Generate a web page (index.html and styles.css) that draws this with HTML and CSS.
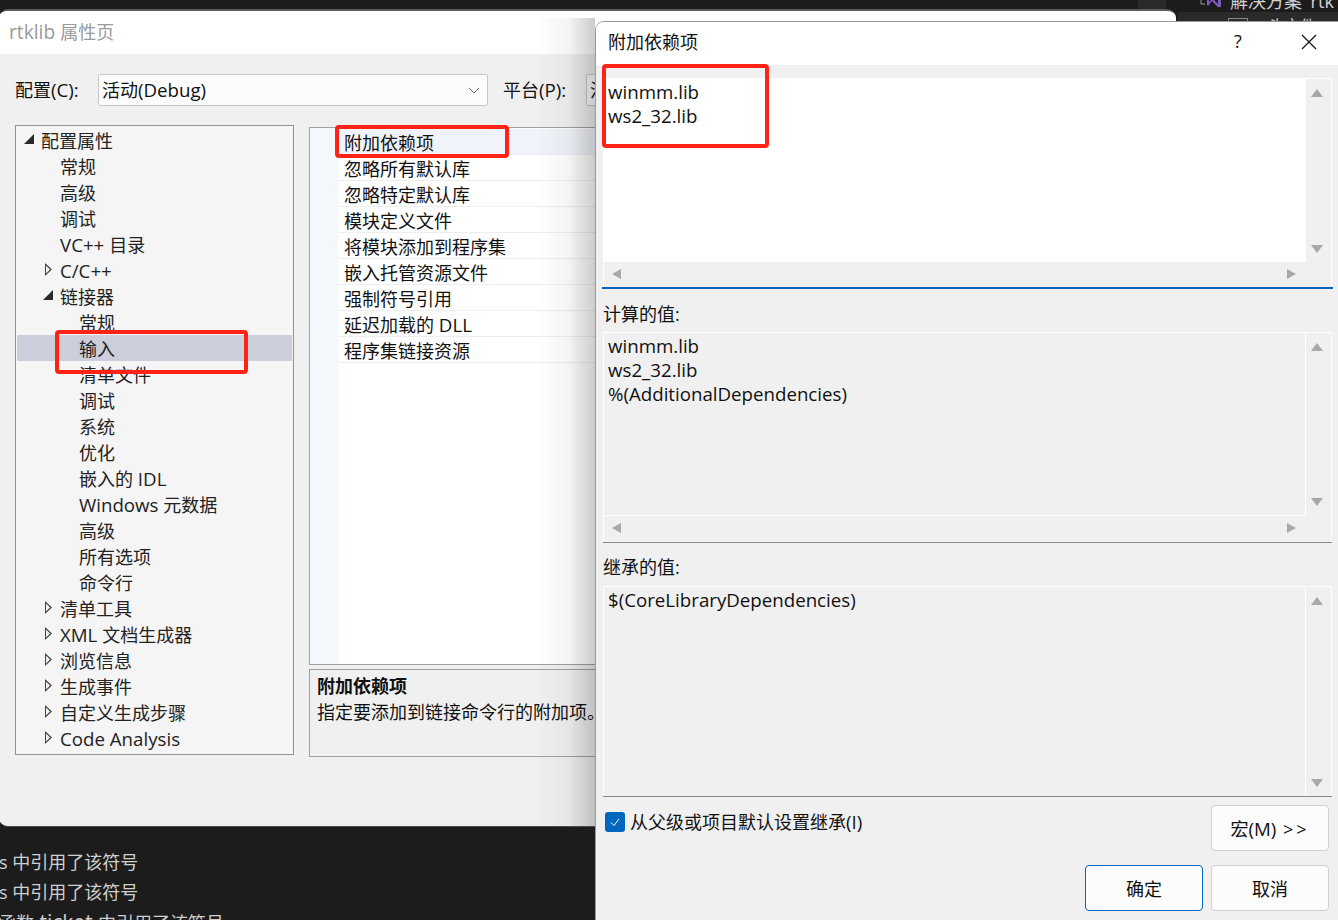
FILE: index.html
```html
<!DOCTYPE html>
<html lang="zh">
<head>
<meta charset="utf-8">
<title>rtklib 属性页</title>
<link rel="stylesheet" href="styles.css">
</head>
<body>
<div class="desktop">
  <div class="topstrip"></div>
  <div class="solution">
    <svg class="vs" width="22" height="14" viewBox="0 0 22 14"><path d="M5 0H1V10H5" fill="none" stroke="#999" stroke-width="1"/><path d="M8 0L12 5L18 0H21V13H18L12 7L8 12L7 11V0ZM9 4V8L11 6ZM18 3L14 6L18 10Z" fill="#7b5bc0" fill-rule="evenodd"/></svg>
    <span class="sol-text">解决方案 'rtk</span>
  </div>
  <div class="sol-row2"><span class="sol-box"></span><span class="sol-t2">头文件</span></div>
  <div class="output">
    <div class="out1">s 中引用了该符号</div>
    <div class="out1">s 中引用了该符号</div>
    <div class="out1 out3">函数<span class="lat-o"> ticket </span>中引用了该符号</div>
  </div>

  <section class="win main">
    <header class="win-title main-title"><span class="lat-t">rtklib </span>属性页</header>
    <div class="cfg">
      <span class="cfg-label">配置<span class="lat">(C):</span></span>
      <div class="combo">活动<span class="lat">(Debug)</span>
        <svg class="chev" width="12" height="7" viewBox="0 0 12 7"><path d="M1 1L6 6L11 1" fill="none" stroke="#666"/></svg>
      </div>
      <span class="cfg-label plat">平台<span class="lat">(P):</span></span>
      <div class="combo combo2">活动<span class="lat">(x64)</span></div>
    </div>
    <div class="panes">
      <nav class="tree">
        <div class="node l0"><i class="tri open"></i>配置属性</div>
        <div class="node l1">常规</div>
        <div class="node l1">高级</div>
        <div class="node l1">调试</div>
        <div class="node l1"><span class="lat">VC++ </span>目录</div>
        <div class="node l1"><i class="tri closed"></i><span class="lat">C/C++</span></div>
        <div class="node l1"><i class="tri open"></i>链接器</div>
        <div class="node l2">常规</div>
        <div class="node l2 sel">输入</div>
        <div class="node l2">清单文件</div>
        <div class="node l2">调试</div>
        <div class="node l2">系统</div>
        <div class="node l2">优化</div>
        <div class="node l2">嵌入的<span class="lat"> IDL</span></div>
        <div class="node l2"><span class="lat">Windows </span>元数据</div>
        <div class="node l2">高级</div>
        <div class="node l2">所有选项</div>
        <div class="node l2">命令行</div>
        <div class="node l1"><i class="tri closed"></i>清单工具</div>
        <div class="node l1"><i class="tri closed"></i><span class="lat">XML </span>文档生成器</div>
        <div class="node l1"><i class="tri closed"></i>浏览信息</div>
        <div class="node l1"><i class="tri closed"></i>生成事件</div>
        <div class="node l1"><i class="tri closed"></i>自定义生成步骤</div>
        <div class="node l1"><i class="tri closed"></i><span class="lat">Code Analysis</span></div>
      </nav>
      <div class="pane-r">
        <div class="grid">
          <div class="row first">附加依赖项</div>
          <div class="row">忽略所有默认库</div>
          <div class="row">忽略特定默认库</div>
          <div class="row">模块定义文件</div>
          <div class="row">将模块添加到程序集</div>
          <div class="row">嵌入托管资源文件</div>
          <div class="row">强制符号引用</div>
          <div class="row">延迟加载的<span class="lat"> DLL</span></div>
          <div class="row">程序集链接资源</div>
        </div>
        <div class="desc">
          <div class="desc-h">附加依赖项</div>
          <div>指定要添加到链接命令行的附加项。</div>
        </div>
      </div>
    </div>
    <span class="mark m-input"></span>
    <span class="mark m-dep"></span>
  </section>
  <div class="shadow"></div>

  <section class="win dialog">
    <header class="win-title dlg-title">
      <span>附加依赖项</span>
      <span class="help">?</span>
      <svg class="close" width="16" height="16" viewBox="0 0 16 16"><path d="M1 1L15 15M15 1L1 15" stroke="#111" stroke-width="1.2" fill="none"/></svg>
    </header>
    <div class="dlg-body">
      <div class="tbox edit">
        <div class="tcontent lat">winmm.lib<br>ws2_32.lib</div>
        <div class="vbar"><i class="a up"></i><i class="a down"></i></div>
        <div class="hbar"><i class="a lf"></i><i class="a rt"></i></div>
      </div>
      <div class="rule-blue"></div>
      <div class="lbl l-calc">计算的值:</div>
      <div class="tbox calc">
        <div class="tcontent lat">winmm.lib<br>ws2_32.lib<br>%(AdditionalDependencies)</div>
        <div class="vbar"><i class="a up"></i><i class="a down"></i></div>
        <div class="hbar"><i class="a lf"></i><i class="a rt"></i></div>
      </div>
      <div class="rule-grey"></div>
      <div class="lbl l-inh">继承的值:</div>
      <div class="tbox inh">
        <div class="tcontent lat">$(CoreLibraryDependencies)</div>
        <div class="vbar"><i class="a up"></i><i class="a down"></i></div>
      </div>
      <div class="rule-grey"></div>
      <div class="foot">
        <label class="check">
          <span class="box"><svg width="14" height="14" viewBox="0 0 14 14"><path d="M3 7.5L6 10.5L11 4" fill="none" stroke="#fff" stroke-width="1"/></svg></span>
          <span>从父级或项目默认设置继承<span class="lat">(I)</span></span>
        </label>
        <button class="btn">宏<span class="lat">(M)</span> <span class="gt">&gt;&gt;</span></button>
      </div>
      <div class="actions">
        <button class="btn primary">确定</button>
        <button class="btn">取消</button>
      </div>
    </div>
    <span class="mark m-lib"></span>
  </section>
</div>
</body>
</html>
```
FILE: styles.css
```css
* { box-sizing: border-box; }
html, body { margin: 0; padding: 0; }
body {
  width: 1338px; height: 920px; overflow: hidden; background: #1c1c1c;
  font-family: "Open Sans", "Noto Sans CJK SC", sans-serif;
  font-size: 18px; color: #111;
}
.desktop { position: relative; width: 1338px; height: 920px; overflow: hidden; }
.lat { font-size: 18.7px; }
.lat-t { font-size: 19.2px; }
.lat-o { font-size: 21px; }

.topstrip { position: absolute; left: 1138px; top: 0; width: 28px; height: 9px; background: #2a2a2a; }
.solution { position: absolute; left: 1178px; top: -8px; width: 160px; height: 18px; display: flex; align-items: center; gap: 8px; padding-left: 22px; color: #d0d0d0; font-size: 18px; }
.sol-text { white-space: nowrap; line-height: 18px; }
.vs { flex: none; }
.sol-row2 { position: absolute; left: 1178px; top: 12px; width: 160px; height: 12px; padding: 6px 0 0 50px; background: #2a2a2a; display: flex; align-items: flex-start; gap: 20px; color: #ccc; font-size: 16px; line-height: 16px; }
.sol-box { width: 20px; height: 10px; flex: none; border: 1px solid #888; }
.sol-t2 { white-space: nowrap; }
.output { position: absolute; left: 0; top: 847px; color: #cfcfcf; font-size: 18px; }
.out1 { height: 30px; line-height: 30px; white-space: nowrap; margin-left: -1px; }
.out3 { margin-left: -2px; }

.win { position: absolute; display: flex; flex-direction: column; background: #f0f0f0; overflow: hidden; }
.win-title { background: #fff; flex: none; }
.main { left: -1px; top: 9px; width: 1177px; height: 818px; border-radius: 9px; border-top: 2px solid #5c5c5c; border-bottom: 1px solid #4a4a4a; padding-left: 1px; }
.main-title { height: 43px; margin-left: -1px; padding: 6px 0 0 10px; font-size: 18px; line-height: 30px; color: #9a9a9a; }

.cfg { display: flex; align-items: center; height: 32px; margin: 20px 0 0 15px; }
.cfg-label { width: 83px; flex: none; line-height: 32px; white-space: nowrap; }
.combo { position: relative; width: 390px; height: 32px; line-height: 29px; background: #fcfcfc; border: 1px solid #c8c8c8; border-radius: 2px; padding-left: 3px; flex: none; white-space: nowrap; }
.chev { position: absolute; right: 7px; top: 12px; }
.plat { width: 83px; margin-left: 15px; }
.combo2 { width: 300px; }

.panes { display: flex; margin: 19px 0 0 15px; align-items: flex-start; }
.tree { width: 279px; height: 630px; flex: none; background: #f5f5f5; border: 1px solid #8f9296; padding: 1px 1px 0; }
.node { position: relative; height: 26px; line-height: 28px; white-space: nowrap; color: #222; }
.l0 { padding-left: 24px; }
.l1 { padding-left: 43px; }
.l2 { padding-left: 62px; }
.sel { background: #cdcedb; }
.tri { position: absolute; width: 0; height: 0; }
.l0 .tri { left: 7px; }
.l1 .tri { left: 26px; }
.tri.open { top: 7px; border-style: solid; border-width: 0 0 10px 10px; border-color: transparent transparent #2a2a2a transparent; }
.l1 .tri.closed { left: 28px; top: 6px; width: 7px; height: 13px; clip-path: polygon(0 0, 100% 50%, 0 100%); background: #444; }
.tri.closed::after { content: ""; position: absolute; left: 1px; top: 2.5px; width: 4px; height: 8px; clip-path: polygon(0 0, 100% 50%, 0 100%); background: #f5f5f5; }

.pane-r { flex: none; width: 860px; margin-left: 15px; padding-top: 2px; }
.grid { height: 538px; background: #fff; border: 1px solid #a0a0a0; padding: 1px 0 0 28px; background-image: linear-gradient(#f4f7fb, #f4f7fb); background-size: 28px 100%; background-repeat: no-repeat; }
.row { height: 26px; line-height: 26px; padding: 1px 0 0 6px; border-bottom: 1px solid #eeeeee; white-space: nowrap; color: #111; }
.row.first { background: #f0f3f9; }
.desc { height: 88px; margin-top: 4px; border: 1px solid #a0a0a0; background: #f0f0f0; padding: 3px 7px; line-height: 26px; white-space: nowrap; }
.desc-h { font-weight: 700; }

.shadow { position: absolute; left: 535px; top: 18px; width: 60px; height: 808px; background: linear-gradient(to right, rgba(0,0,0,0), rgba(0,0,0,.04) 55%, rgba(0,0,0,.2)); }

.dialog { left: 595px; top: 21px; width: 760px; height: 915px; border-radius: 9px; border: 1px solid #9a9a9a; }
.dlg-title { position: relative; height: 43px; padding-left: 12px; font-size: 18px; line-height: 40px; display: flex; }
.help { position: absolute; left: 638px; top: -1px; font-size: 18px; }
.close { position: absolute; left: 705px; top: 12px; }
.dlg-body { padding: 13px 0 0 7px; width: 740px; }
.tbox { position: relative; width: 729px; overflow: hidden; line-height: 24px; border: 1px solid #fff; border-bottom: 0; }
.tcontent { padding: 1px 0 0 4px; white-space: nowrap; }
.vbar { position: absolute; right: 0; top: 0; width: 26px; border-left: 1px solid #fff; background: #f0f0f0; z-index: 1; }
.hbar { position: absolute; left: 0; bottom: 0; right: 0; height: 25px; background: #f0f0f0; }
.a { position: absolute; width: 0; height: 0; border-style: solid; border-color: transparent; }
.up { top: 10px; left: 5px; border-width: 0 6px 8px; border-bottom-color: #a8a8a8; }
.down { bottom: 9px; left: 5px; border-width: 8px 6px 0; border-top-color: #a8a8a8; }
.lf { left: 8px; top: 7px; border-width: 5.5px 9px 5.5px 0; border-right-color: #a8a8a8; }
.rt { right: 35px; top: 7px; border-width: 5.5px 0 5.5px 9px; border-left-color: #a8a8a8; }
.edit { height: 209px; background: #fff; }
.edit .vbar { height: 183px; }
.calc { height: 210px; margin-top: 6px; }
.calc .vbar { height: 182px; }
.calc .hbar { height: 27px; background: #f0f0f0 linear-gradient(#fff, #fff) 0 0 / calc(100% - 25px) 1px no-repeat; }
.calc .hbar .a { top: 8px; }
.inh { height: 210px; margin-top: 7px; }
.inh .vbar { height: 209px; }
.rule-blue { width: 731px; height: 2px; margin-left: -1px; background: #0067c0; }
.rule-grey { width: 729px; height: 1px; background: #8a8a8a; }
.lbl { height: 24px; line-height: 24px; white-space: nowrap; }
.l-calc { margin-top: 13px; }
.l-inh { margin-top: 12px; }
.foot { display: flex; justify-content: space-between; align-items: flex-start; width: 726px; margin-top: 8px; }
.check { display: flex; align-items: flex-start; gap: 5px; line-height: 24px; margin: 5px 0 0 2px; white-space: nowrap; }
.box { width: 20px; height: 20px; margin-top: 2px; background: #0067c0; border-radius: 3px; display: flex; align-items: center; justify-content: center; }
.btn { width: 118px; height: 46px; font: inherit; font-size: 18px; background: #fcfcfc; border: 1px solid #d0d0d0; border-radius: 4px; padding: 0; color: #111; }
.gt { letter-spacing: 3px; margin-left: 2px; }
.actions { display: flex; justify-content: flex-end; gap: 8px; width: 726px; margin-top: 14px; }
.primary { border-color: #0067c0; }

.mark { position: absolute; border: 4px solid #fe2316; border-radius: 4px; background: transparent; }
.m-input { left: 56px; top: 319px; width: 193px; height: 44px; }
.m-dep { left: 336px; top: 114px; width: 174px; height: 33px; }
.m-lib { left: 6px; top: 42px; width: 167px; height: 84px; }
```
